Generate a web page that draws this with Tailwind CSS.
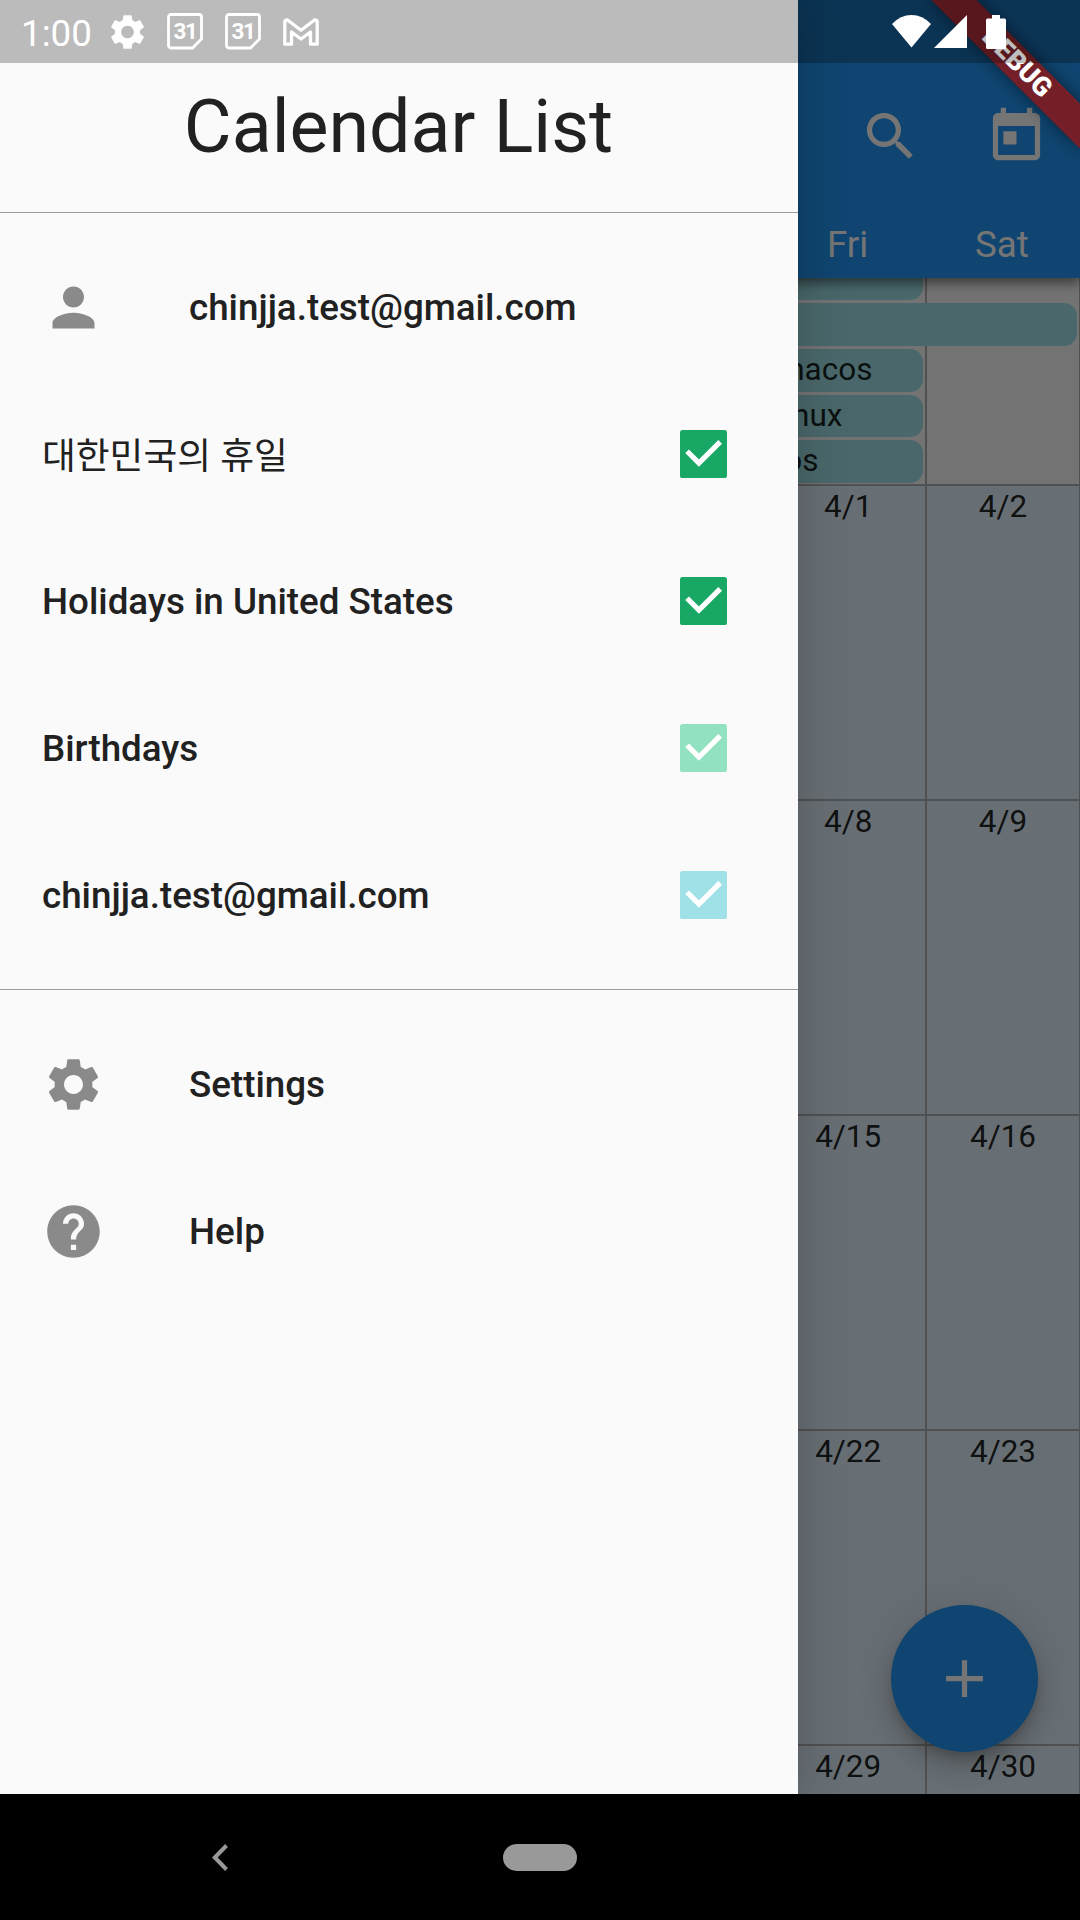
<!DOCTYPE html>
<html lang="en">
<head>
<meta charset="utf-8">
<title>Calendar List</title>
<script src="https://cdn.jsdelivr.net/npm/@tailwindcss/browser@4"></script>
</head>
<body class="bg-black">
<div class="relative w-[1080px] h-[1920px] overflow-hidden font-[Roboto,'Noto_Sans_CJK_KR',sans-serif] flex flex-col">

  <!-- Calendar screen -->
  <div class="relative h-[1794px] flex flex-col bg-[#fafafa] overflow-hidden">
    <header class="relative z-10 h-[278px] shrink-0 bg-[#2196f3] text-white flex flex-col shadow-[0_5px_11px_rgba(0,0,0,0.5)]">
      <div class="h-[210px] pt-[105px] pr-[32px] flex justify-end gap-[63px]">
        <svg class="size-[63px]" viewBox="0 0 24 24" fill="currentColor"><path d="M15.5 14h-.79l-.28-.27A6.471 6.471 0 0 0 16 9.5 6.5 6.5 0 1 0 9.5 16c1.61 0 3.09-.59 4.23-1.57l.27.28v.79l5 4.99L20.49 19l-4.99-5zm-6 0C7.01 14 5 11.99 5 9.5S7.01 5 9.5 5 14 7.01 14 9.5 11.99 14 9.5 14z"/></svg>
        <svg class="size-[63px]" viewBox="0 0 24 24" fill="currentColor"><path d="M19 3h-1V1h-2v2H8V1H6v2H5c-1.11 0-1.99.9-1.99 2L3 19c0 1.1.89 2 2 2h14c1.1 0 2-.9 2-2V5c0-1.1-.9-2-2-2zm0 16H5V8h14v11zM7 10h5v5H7z"/></svg>
      </div>
      <div class="h-[68px] pr-px flex justify-end text-[36.75px] leading-[70px] text-center">
        <div class="w-[154.3px]">Fri</div>
        <div class="w-[154.3px]">Sat</div>
      </div>
    </header>

    <div class="w-[308.6px] ml-auto flex flex-col text-[31.5px] text-black/87">
      <div class="relative h-[208px] shrink-0 grid grid-cols-[155.6px_1fr] border-b-2 border-[#b0b0b0]">
        <div class="border-r-2 border-[#b0b0b0]"></div>
        <div class="border-r border-[#b0b0b0]"></div>
        <div class="absolute inset-0 flex flex-col gap-[3px] -mt-[20.2px] leading-[42.6px] text-right">
          <div class="h-[42.6px] w-[152px] rounded-r-[13px] bg-[#a1e3e9]"></div>
          <div class="h-[42.6px] w-[306px] rounded-r-[13px] bg-[#a1e3e9]"></div>
          <div class="h-[42.6px] w-[152px] rounded-r-[13px] bg-[#a1e3e9] pr-[51px]">macos</div>
          <div class="h-[42.6px] w-[152px] rounded-r-[13px] bg-[#a1e3e9] pr-[81px]">linux</div>
          <div class="h-[42.6px] w-[152px] rounded-r-[13px] bg-[#a1e3e9] pr-[105px]">ios</div>
        </div>
      </div>
      <div class="h-[315px] shrink-0 grid grid-cols-[155.6px_1fr] border-b-2 border-[#b0b0b0] bg-[#e3f2fd] text-center leading-[41px]">
        <div class="border-r-2 border-[#b0b0b0]">4/1</div><div class="border-r border-[#b0b0b0]">4/2</div>
      </div>
      <div class="h-[315px] shrink-0 grid grid-cols-[155.6px_1fr] border-b-2 border-[#b0b0b0] bg-[#e3f2fd] text-center leading-[41px]">
        <div class="border-r-2 border-[#b0b0b0]">4/8</div><div class="border-r border-[#b0b0b0]">4/9</div>
      </div>
      <div class="h-[315px] shrink-0 grid grid-cols-[155.6px_1fr] border-b-2 border-[#b0b0b0] bg-[#e3f2fd] text-center leading-[41px]">
        <div class="border-r-2 border-[#b0b0b0]">4/15</div><div class="border-r border-[#b0b0b0]">4/16</div>
      </div>
      <div class="h-[315px] shrink-0 grid grid-cols-[155.6px_1fr] border-b-2 border-[#b0b0b0] bg-[#e3f2fd] text-center leading-[41px]">
        <div class="border-r-2 border-[#b0b0b0]">4/22</div><div class="border-r border-[#b0b0b0]">4/23</div>
      </div>
      <div class="h-[60px] shrink-0 grid grid-cols-[155.6px_1fr] bg-[#e3f2fd] text-center leading-[41px]">
        <div class="border-r-2 border-[#b0b0b0]">4/29</div><div class="border-r border-[#b0b0b0]">4/30</div>
      </div>
    </div>

    <!-- Floating action button -->
    <div class="absolute right-[42px] bottom-[42px] size-[147px] rounded-full bg-[#2196f3] text-white flex items-center justify-center shadow-[0_8px_13px_-3px_rgba(0,0,0,0.2),0_16px_26px_rgba(0,0,0,0.14),0_3px_47px_rgba(0,0,0,0.12)]">
      <svg class="size-[63px]" viewBox="0 0 24 24" fill="currentColor"><path d="M19 13h-6v6h-2v-6H5v-2h6V5h2v6h6v2z"/></svg>
    </div>

    <!-- Scrim -->
    <div class="absolute inset-0 z-20 bg-black/54"></div>

    <!-- Drawer -->
    <aside class="absolute left-0 top-0 z-30 w-[798px] h-full bg-[#fafafa] pt-[63px] text-[#212121] shadow-[0_0_47px_rgba(0,0,0,0.22)]">
      <h1 class="h-[128px] pr-px text-[73.5px] leading-[128px] text-center">Calendar List</h1>
      <div class="h-[42.5px] pt-[21px]"><div class="h-px bg-[#9c9c9c]"></div></div>
      <ul class="text-[36.75px] font-medium">
        <li class="h-[147px] px-[42px] flex items-center gap-[84px]">
          <svg class="size-[63px] text-[#8a8a8a]" viewBox="0 0 24 24" fill="currentColor"><path d="M12 12c2.21 0 4-1.79 4-4s-1.79-4-4-4-4 1.79-4 4 1.79 4 4 4zm0 2c-2.67 0-8 1.34-8 4v2h16v-2c0-2.66-5.33-4-8-4z"/></svg>
          <span class="pt-[2px]">chinjja.test@gmail.com</span>
        </li>
        <li class="h-[147px] pl-[42px] pr-[71px] flex items-center justify-between">
          <span class="pt-[6px] font-normal">대한민국의 휴일</span>
          <svg class="size-[47.25px] rounded-[2.6px] bg-[#18a765]" viewBox="0 0 18 18" fill="none" stroke="#fff" stroke-width="2"><path d="M2.7 8.1L7.2 12.6L15.3 4.5"/></svg>
        </li>
        <li class="h-[147px] pl-[42px] pr-[71px] flex items-center justify-between">
          <span class="pt-[2px]">Holidays in United States</span>
          <svg class="size-[47.25px] rounded-[2.6px] bg-[#18a765]" viewBox="0 0 18 18" fill="none" stroke="#fff" stroke-width="2"><path d="M2.7 8.1L7.2 12.6L15.3 4.5"/></svg>
        </li>
        <li class="h-[147px] pl-[42px] pr-[71px] flex items-center justify-between">
          <span class="pt-[2px]">Birthdays</span>
          <svg class="size-[47.25px] rounded-[2.6px] bg-[#92e1c0]" viewBox="0 0 18 18" fill="none" stroke="#fff" stroke-width="2"><path d="M2.7 8.1L7.2 12.6L15.3 4.5"/></svg>
        </li>
        <li class="h-[147px] pl-[42px] pr-[71px] flex items-center justify-between">
          <span class="pt-[2px]">chinjja.test@gmail.com</span>
          <svg class="size-[47.25px] rounded-[2.6px] bg-[#9fe1e7]" viewBox="0 0 18 18" fill="none" stroke="#fff" stroke-width="2"><path d="M2.7 8.1L7.2 12.6L15.3 4.5"/></svg>
        </li>
      </ul>
      <div class="h-[42px] pt-[20.5px]"><div class="h-px bg-[#9c9c9c]"></div></div>
      <ul class="text-[36.75px] font-medium">
        <li class="h-[147px] px-[42px] flex items-center gap-[84px]">
          <svg class="size-[63px] text-[#8a8a8a]" viewBox="0 0 24 24" fill="currentColor"><path d="M19.14 12.94c.04-.3.06-.61.06-.94 0-.32-.02-.64-.07-.94l2.03-1.58c.18-.14.23-.41.12-.61l-1.92-3.32c-.12-.22-.37-.29-.59-.22l-2.39.96c-.5-.38-1.03-.7-1.62-.94l-.36-2.54c-.04-.24-.24-.41-.48-.41h-3.84c-.24 0-.43.17-.47.41l-.36 2.54c-.59.24-1.13.57-1.62.94l-2.39-.96c-.22-.08-.47 0-.59.22L2.74 8.87c-.12.21-.08.47.12.61l2.03 1.58c-.05.3-.09.63-.09.94s.02.64.07.94l-2.03 1.58c-.18.14-.23.41-.12.61l1.92 3.32c.12.22.37.29.59.22l2.39-.96c.5.38 1.03.7 1.62.94l.36 2.54c.05.24.24.41.48.41h3.84c.24 0 .44-.17.47-.41l.36-2.54c.59-.24 1.13-.56 1.62-.94l2.39.96c.22.08.47 0 .59-.22l1.92-3.32c.12-.22.07-.47-.12-.61l-2.01-1.58zM12 15.6c-1.98 0-3.6-1.62-3.6-3.6s1.62-3.6 3.6-3.6 3.6 1.62 3.6 3.6-1.62 3.6-3.6 3.6z"/></svg>
          <span class="pt-[2px]">Settings</span>
        </li>
        <li class="h-[147px] px-[42px] flex items-center gap-[84px]">
          <svg class="size-[63px] text-[#8a8a8a]" viewBox="0 0 24 24" fill="currentColor"><path d="M12 2C6.48 2 2 6.48 2 12s4.48 10 10 10 10-4.48 10-10S17.52 2 12 2zm1 17h-2v-2h2v2zm2.07-7.75l-.9.92C13.45 12.9 13 13.5 13 15h-2v-.5c0-1.1.45-2.1 1.17-2.83l1.24-1.26c.37-.36.59-.86.59-1.41 0-1.1-.9-2-2-2s-2 .9-2 2H8c0-2.21 1.79-4 4-4s4 1.79 4 4c0 .88-.36 1.68-.93 2.25z"/></svg>
          <span class="pt-[2px]">Help</span>
        </li>
      </ul>
    </aside>

    <!-- Debug ribbon -->
    <div class="absolute left-[912px] top-[47.25px] z-40 w-[210px] h-[31.5px] rotate-45 bg-[#8d1616]/81 shadow-[0_0_16px_rgba(0,0,0,0.5)] text-white text-center text-[26.8px] leading-[31.5px] font-black">DEBUG</div>
  </div>

  <!-- Status bar -->
  <div class="absolute inset-x-0 top-0 z-50 h-[63px] bg-black/25 text-white flex items-center pl-[21px] pr-[74px]">
    <div class="w-[89.5px] text-[36.75px] leading-[63px] pt-[3px]">1:00</div>
    <svg class="w-[33px] h-[34px]" viewBox="2.6 2.4 18.8 19.2" fill="currentColor"><path d="M19.14 12.94c.04-.3.06-.61.06-.94 0-.32-.02-.64-.07-.94l2.03-1.58c.18-.14.23-.41.12-.61l-1.92-3.32c-.12-.22-.37-.29-.59-.22l-2.39.96c-.5-.38-1.03-.7-1.62-.94l-.36-2.54c-.04-.24-.24-.41-.48-.41h-3.84c-.24 0-.43.17-.47.41l-.36 2.54c-.59.24-1.13.57-1.62.94l-2.39-.96c-.22-.08-.47 0-.59.22L2.74 8.87c-.12.21-.08.47.12.61l2.03 1.58c-.05.3-.09.63-.09.94s.02.64.07.94l-2.03 1.58c-.18.14-.23.41-.12.61l1.92 3.32c.12.22.37.29.59.22l2.39-.96c.5.38 1.03.7 1.62.94l.36 2.54c.05.24.24.41.48.41h3.84c.24 0 .44-.17.47-.41l.36-2.54c.59-.24 1.13-.56 1.62-.94l2.39.96c.22.08.47 0 .59-.22l1.92-3.32c.12-.22.07-.47-.12-.61l-2.01-1.58zM12 15.6c-1.98 0-3.6-1.62-3.6-3.6s1.62-3.6 3.6-3.6 3.6 1.62 3.6 3.6-1.62 3.6-3.6 3.6z"/></svg>
    <div class="relative ml-[23.5px] w-[36px] h-[37px] text-center text-[22.5px] leading-[37px] font-bold tracking-[-1.5px]">
      <svg class="absolute inset-0 size-full" viewBox="0 0 36 37" fill="none" stroke="currentColor" stroke-width="2.8"><path d="M4 1.5H32a2.5 2.5 0 0 1 2.5 2.500V26L25.500 35H4A2.500 2.500 0 0 1 1.500 32.500V4A2.500 2.500 0 0 1 4 1.500z"/></svg>31
    </div>
    <div class="relative ml-[22px] w-[36px] h-[37px] text-center text-[22.5px] leading-[37px] font-bold tracking-[-1.5px]">
      <svg class="absolute inset-0 size-full" viewBox="0 0 36 37" fill="none" stroke="currentColor" stroke-width="2.8"><path d="M4 1.5H32a2.5 2.5 0 0 1 2.5 2.500V26L25.500 35H4A2.500 2.500 0 0 1 1.500 32.500V4A2.500 2.500 0 0 1 4 1.500z"/></svg>31
    </div>
    <svg class="ml-[22px] w-[36px] h-[28px]" viewBox="0 0 36 28" fill="none" stroke="currentColor" stroke-width="3.3" stroke-linejoin="round"><path d="M1.800 26.200V4Q1.800 1.800 4.500 2L18 12.200L31.500 2Q34.200 1.800 34.200 4V26.200H27.500V14L18 21L8.500 14V26.200Z"/></svg>
    <div class="ml-auto flex items-center">
      <svg class="w-[39px] h-[33px]" viewBox="0 0 39 33" fill="currentColor"><path d="M0 9Q8.500 0 19.500 0T39 9L19.500 32.500z"/></svg>
      <svg class="ml-[3px] w-[33px] h-[33px]" viewBox="0 0 33 33" fill="currentColor"><path d="M33 0V33H0z"/></svg>
      <svg class="ml-[19px] w-[20px] h-[34px]" viewBox="0 0 20 34" fill="currentColor"><path d="M6 0h8v3.500h4.500a1.500 1.500 0 0 1 1.500 1.500V32.500a1.500 1.500 0 0 1-1.500 1.500H1.500a1.500 1.500 0 0 1-1.500-1.500V5a1.500 1.500 0 0 1 1.500-1.500H6z"/></svg>
    </div>
  </div>

  <!-- Navigation bar -->
  <nav class="h-[126px] bg-black flex items-center pl-[212px]">
    <svg class="w-[16px] h-[27px]" viewBox="0 0 16 27" fill="none" stroke="#999" stroke-width="4"><path d="M14.500 1.500L2.800 13.500L14.500 25.500"/></svg>
    <div class="ml-[275px] w-[74px] h-[27px] rounded-full bg-[#999]"></div>
  </nav>
</div>
</body>
</html>
